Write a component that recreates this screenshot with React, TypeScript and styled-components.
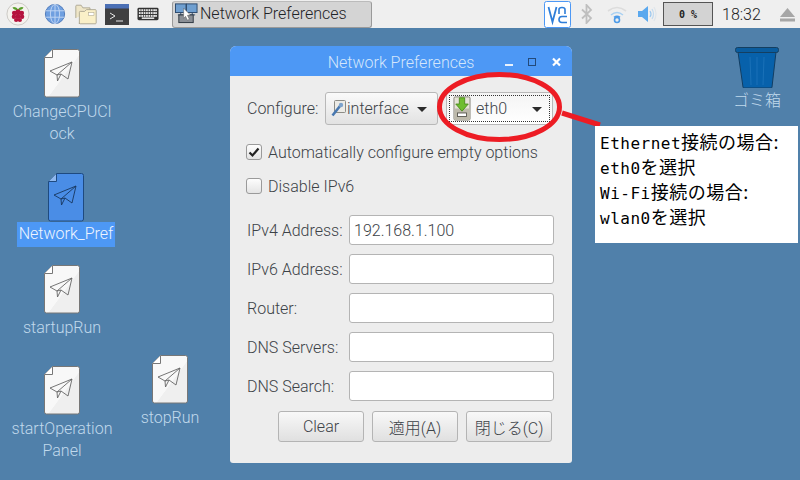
import React from 'react';
import styled, { createGlobalStyle } from 'styled-components';

const GlobalStyle = createGlobalStyle`
  html, body {
    margin: 0;
    padding: 0;
    width: 800px;
    height: 480px;
    overflow: hidden;
    background: #5080aa;
    font-family: Roboto, "Noto Sans CJK JP", sans-serif;
  }
  * { box-sizing: border-box; }
`;

const Raspberry = () => (
  <svg width="24" height="24" viewBox="0 0 26 26">
    <circle cx="13" cy="13" r="12" fill="#f4f2ee" stroke="#c9c7c2" />
    <path d="M13 8C11 5 8 5 7 6c1 2 3 3 6 3zM13 8c2-3 5-3 6-2-1 2-3 3-6 3z" fill="#5aa02c" />
    <g fill="#b5123e">
      <circle cx="13" cy="11" r="3" />
      <circle cx="9" cy="12" r="2.6" />
      <circle cx="17" cy="12" r="2.6" />
      <circle cx="8.6" cy="16" r="2.4" />
      <circle cx="17.4" cy="16" r="2.4" />
      <circle cx="13" cy="15.5" r="2.8" />
      <circle cx="11" cy="19.5" r="2.3" />
      <circle cx="15" cy="19.5" r="2.3" />
    </g>
  </svg>
);

const Globe = () => (
  <svg width="22" height="22" viewBox="0 0 24 24">
    <circle cx="12" cy="12" r="10.5" fill="#6f9fe0" stroke="#4a76b8" />
    <g fill="none" stroke="#c4d8f4" strokeWidth="1">
      <ellipse cx="12" cy="12" rx="5" ry="10.5" />
      <path d="M12 1.5v21M2 8.500h20M2 15.500h20" />
    </g>
  </svg>
);

const Folders = () => (
  <svg width="24" height="23" viewBox="0 0 26 26">
    <path d="M1.500 17V3.500q0-1 1-1h5l2 3h8v5" fill="#efe6c8" stroke="#a9a38f" />
    <path d="M5.500 23.500v-13q0-1 1-1h5l2-2h10q1 0 1 1v14q0 1-1 1h-17q-1 0-1-1z" fill="#faf0c8" stroke="#a9a38f" />
    <rect x="16" y="11" width="6" height="3" fill="#fff" stroke="#a9a38f" strokeWidth="0.6" />
  </svg>
);

const Terminal = () => (
  <svg width="24" height="21" viewBox="0 0 24 21">
    <rect width="24" height="21" fill="#3f3f40" />
    <rect width="24" height="4.500" fill="#4a6fb5" />
    <path d="M5 9l5 3-5 3" fill="none" stroke="#e8e8e8" />
    <path d="M11 17h7" stroke="#e8e8e8" />
  </svg>
);

const Keyboard = () => (
  <svg width="22" height="14" viewBox="0 0 23 14">
    <rect x="0.500" y="0.500" width="22" height="13" rx="1.500" fill="#333" />
    <g fill="#e6e6e6">
      {[2, 4.5, 7, 9.5, 12, 14.5, 17, 19].flatMap((x) =>
        [2, 5, 8].map((y) => <rect key={`${x}-${y}`} x={x} y={y} width="1.8" height="2" />)
      )}
      <rect x="5" y="10.6" width="13" height="1.6" />
    </g>
  </svg>
);

const NetworkGlyph = () => (
  <svg width="23" height="24" viewBox="0 0 24 24">
    <rect x="0.500" y="2.500" width="11" height="9" fill="#6f9fd0" stroke="#2d4a6e" />
    <rect x="12" y="2.500" width="11" height="9" fill="#6f9fd0" stroke="#2d4a6e" />
    <path d="M3 14h6M15 14h6M6 11.500V14M18 11.500V14" stroke="#2d4a6e" />
    <rect x="4" y="14" width="15" height="8" fill="#8a8f96" stroke="#2d3640" />
    <path d="M9 7l7 7-3 .5 2 4-2 1-2-4-2 2z" fill="#fff" stroke="#555" strokeWidth="0.5" />
  </svg>
);

const VncLogo = () => (
  <svg width="27" height="27" viewBox="0 0 27 27">
    <rect x="0.500" y="0.500" width="26" height="26" rx="2" fill="#fff" stroke="#4d98f5" />
    <path d="M4.500 6l4 15 4-15" fill="none" stroke="#2f7ed8" strokeWidth="1.8" />
    <path d="M15 13V8.500q0-2 3-2t3 2V13" fill="none" stroke="#2f7ed8" strokeWidth="1.6" />
    <path d="M23 15.500h-5q-3 0-3 3t3 3h5" fill="none" stroke="#2f7ed8" strokeWidth="1.6" />
  </svg>
);

const Bluetooth = () => (
  <svg width="12" height="20" viewBox="0 0 12 20">
    <path d="M1 5.500l9 8.500-4.500 5V1L10 6l-9 8.500" fill="none" stroke="#bfbfbf" strokeWidth="1.8" />
  </svg>
);

const Wifi = () => (
  <svg width="20" height="19" viewBox="0 0 20 19">
    <path d="M1 6q9-7 18 0" fill="none" stroke="#dcdcdc" strokeWidth="1.6" />
    <path d="M4 10q6-5 12 0" fill="none" stroke="#a8d0f2" strokeWidth="1.6" />
    <circle cx="10" cy="15" r="2.500" fill="none" stroke="#4d9be8" strokeWidth="1.6" />
    <path d="M7 12.300q3-2.200 6 0" fill="none" stroke="#4d9be8" strokeWidth="1.6" />
  </svg>
);

const Speaker = () => (
  <svg width="20" height="18" viewBox="0 0 20 18">
    <path d="M0 6h4l6-5v16l-6-5H0z" fill="#5aa8ee" />
    <path d="M12 6q2 3 0 6" fill="none" stroke="#9cc8ef" strokeWidth="1.2" />
    <path d="M14 4q3 5 0 10" fill="none" stroke="#c2daef" strokeWidth="1.2" />
    <path d="M16 2q4 7 0 14" fill="none" stroke="#dfe5ea" strokeWidth="1.2" />
  </svg>
);

const Eject = () => (
  <svg width="15" height="15" viewBox="0 0 15 15">
    <path d="M7.500 1L15 10H0z" fill="#a6a6a6" />
    <rect y="11.500" width="15" height="3" fill="#a6a6a6" />
  </svg>
);

const Plane = ({ stroke }: { stroke: string }) => (
  <g fill="none" stroke={stroke} strokeWidth="0.9" strokeLinejoin="round">
    <path d="M28 13L6 22l7 4 4-1 7 5z" />
    <path d="M28 13L13 26l.5 6 3.500-7" />
  </g>
);

const DocIcon = ({ selected }: { selected?: boolean }) => (
  <svg width="36" height="49" viewBox="0 0 36 49">
    <defs>
      <linearGradient id="pageFill" x1="0" y1="0" x2="1" y2="1">
        <stop offset="0.55" stopColor="#f8f8f8" />
        <stop offset="0.56" stopColor="#efefef" />
      </linearGradient>
    </defs>
    <path
      d="M8.500 .5H33.500q2 0 2 2V46q0 2-2 2H2.500q-2 0-2-2V8.500z"
      fill={selected ? '#4a8de6' : 'url(#pageFill)'}
      stroke={selected ? '#1e4a80' : '#777'}
    />
    <path d="M8.500 .5V8.500H.5" fill={selected ? '#8fb8ee' : '#fff'} stroke={selected ? '#1e4a80' : '#777'} />
    <Plane stroke={selected ? '#17375f' : '#666'} />
  </svg>
);

const TrashIcon = () => (
  <svg width="44" height="41" viewBox="0 0 44 41">
    <path d="M3 5h38l-4 35q0 1-1 1H9q-1 0-1-1z" fill="#0761ab" stroke="#123e63" />
    <path d="M15 10l1 28M22 10v28M29 10l-1 28" stroke="#1a71b8" />
    <rect x="0.500" y="0.500" width="43" height="5" rx="2" fill="#0a5c9e" stroke="#143f61" />
  </svg>
);

const DriveGlyph = () => (
  <svg width="20" height="25" viewBox="0 0 22 28">
    <rect x="2" y="1" width="18" height="26" rx="1.500" fill="#e6e3d8" stroke="#7d7a70" />
    <rect x="2.500" y="14" width="17" height="12.500" fill="#bdb9aa" />
    <rect x="6" y="19" width="10" height="4" fill="#fff" stroke="#55534a" />
    <path d="M8 2h6v7h4l-7 8-7-8h4z" fill="#6fbd2f" stroke="#4a8a1c" />
  </svg>
);

const WrenchGlyph = () => (
  <svg width="15" height="17" viewBox="0 0 15 17">
    <rect x="3.500" y="0.500" width="11" height="12" rx="1" fill="#ecebe6" stroke="#8c8c86" />
    <path d="M1.500 15.500L9 6" stroke="#4878b0" strokeWidth="2.600" />
    <circle cx="10" cy="5" r="2.200" fill="#7da3cc" />
  </svg>
);

const Desktop = styled.div`
  position: relative;
  width: 800px;
  height: 480px;
  background: #5080aa;
  overflow: hidden;
`;

const Panel = styled.header`
  display: flex;
  align-items: center;
  height: 28px;
  background: #efefef;
  color: #333;
`;

const Launchers = styled.div`
  display: flex;
  align-items: center;
  width: 172px;
  padding-left: 6px;
`;

const LauncherSlot = styled.span<{ $gap: number }>`
  display: flex;
  margin-left: ${(p) => p.$gap}px;
`;

const TaskButton = styled.div`
  display: flex;
  align-items: center;
  gap: 2px;
  width: 200px;
  height: 27px;
  padding: 0 0 2px 2px;
  background: #d4d4d4;
  border: 1px solid #9a9a9a;
  border-top-color: #bbb;
  border-radius: 3px;
  font-size: 16px;
  font-weight: 300;
  color: #1f2327;
`;

const Tray = styled.div`
  display: flex;
  align-items: center;
  margin-left: auto;
  height: 28px;
`;

const TraySlot = styled.span<{ $w: number }>`
  display: flex;
  justify-content: center;
  width: ${(p) => p.$w}px;
`;

const CpuBox = styled.div`
  display: flex;
  align-items: center;
  justify-content: center;
  width: 50px;
  height: 24px;
  background: #d3d3d3;
  border: 1px solid #555;
  font-family: "DejaVu Sans Mono", monospace;
  font-size: 10px;
  font-weight: 700;
  color: #222;
`;

const Clock = styled.div`
  width: 62px;
  padding-left: 9px;
  font-size: 16px;
  font-weight: 300;
  color: #222;
`;

const IconCell = styled.div<{ $x: number; $y: number; $w?: number }>`
  position: absolute;
  left: ${(p) => p.$x}px;
  top: ${(p) => p.$y}px;
  width: ${(p) => p.$w ?? 104}px;
  display: flex;
  flex-direction: column;
  align-items: center;
`;

const IconLabel = styled.div<{ $selected?: boolean; $gap?: number }>`
  margin-top: ${(p) => p.$gap ?? 3}px;
  padding: ${(p) => (p.$selected ? '1px 2px 2px' : '0')};
  background: ${(p) => (p.$selected ? '#4d98f5' : 'transparent')};
  color: ${(p) => (p.$selected ? '#eef5ff' : '#c0d9ec')};
  font-size: 16px;
  font-weight: 300;
  line-height: 22px;
  text-align: center;
  word-break: break-all;
`;

const Window = styled.section`
  position: absolute;
  left: 230px;
  top: 46px;
  width: 342px;
  height: 417px;
  display: flex;
  flex-direction: column;
  background: #ededed;
  border-radius: 6px 6px 3px 3px;
  overflow: hidden;
`;

const TitleBar = styled.div`
  position: relative;
  flex: 0 0 30px;
  display: flex;
  align-items: center;
  justify-content: center;
  padding-top: 2px;
  background: #4d98f5;
  color: #d4e6fb;
  font-size: 16px;
  font-weight: 300;
`;

const TitleControls = styled.div`
  position: absolute;
  right: 9px;
  top: 10px;
  display: flex;
  align-items: flex-start;
  gap: 13px;
`;

const WindowBody = styled.div`
  display: flex;
  flex-direction: column;
  padding: 16px 18px 0 16px;
  color: #3c4247;
  font-size: 16px;
  font-weight: 300;
`;

const ConfigRow = styled.div`
  display: flex;
  align-items: center;
  gap: 5px;
  height: 33px;
`;

const ConfigLabel = styled.span`
  width: 74px;
  padding-left: 1px;
`;

const Combo = styled.div<{ $w: number; $focus?: boolean }>`
  position: relative;
  display: flex;
  align-items: center;
  gap: ${(p) => (p.$focus ? 4 : 1)}px;
  width: ${(p) => p.$w}px;
  height: 33px;
  margin-left: ${(p) => (p.$focus ? 3 : 0)}px;
  padding: 0 5px;
  border: 1px solid #b8b8b8;
  border-radius: 3px;
  background: ${(p) => (p.$focus ? 'linear-gradient(#f4f4f4, #fff)' : 'linear-gradient(#fafafa, #e2e2e2)')};
  outline: ${(p) => (p.$focus ? '1px dotted #333' : 'none')};
  outline-offset: -4px;
`;

const Caret = styled.span`
  position: absolute;
  right: 10px;
  top: 14px;
  width: 0;
  height: 0;
  border-left: 5px solid transparent;
  border-right: 5px solid transparent;
  border-top: 5px solid #2b2b2b;
`;

const CheckRow = styled.label<{ $top: number }>`
  display: flex;
  align-items: center;
  gap: 6px;
  margin-top: ${(p) => p.$top}px;
  height: 20px;
`;

const CheckBox = styled.span`
  display: flex;
  align-items: center;
  justify-content: center;
  width: 16px;
  height: 16px;
  border: 1px solid #9a9a9a;
  border-radius: 3px;
  background: linear-gradient(#fdfdfd, #e4e4e4);
`;

const FieldGrid = styled.div`
  display: grid;
  grid-template-columns: 102px 205px;
  row-gap: 9px;
  margin-top: 19px;
  padding-left: 1px;
`;

const FieldLabel = styled.span`
  align-self: center;
`;

const Field = styled.div`
  height: 30px;
  padding: 0 4px;
  display: flex;
  align-items: center;
  border: 1px solid #b4b4b4;
  border-radius: 3px;
  background: #fff;
  color: #3c4247;
`;

const ButtonRow = styled.div`
  display: flex;
  justify-content: flex-end;
  gap: 8px;
  margin-top: 10px;
  padding-right: 2px;
`;

const ActionButton = styled.button`
  width: 86px;
  height: 31px;
  padding: 0;
  border: 1px solid #b4b4b4;
  border-radius: 3px;
  background: linear-gradient(#f8f8f8, #e0e0e0);
  color: #3c4247;
  font-family: inherit;
  font-size: 16px;
  font-weight: 300;
`;

const Overlay = styled.svg`
  position: absolute;
  left: 0;
  top: 0;
  pointer-events: none;
`;

const Callout = styled.div`
  position: absolute;
  left: 595px;
  top: 126px;
  width: 203px;
  height: 117px;
  padding: 3px 0 0 5px;
  background: #fff;
  color: #000;
  font-family: "Noto Sans CJK JP", sans-serif;
  font-size: 18px;
  font-weight: 400;
  line-height: 25px;
  letter-spacing: 0.5px;
  white-space: nowrap;
`;

const CalloutLine = styled.div`
  height: 25px;
`;

const Latin = styled.span`
  font-family: "DejaVu Sans Mono", monospace;
  font-size: 16px;
`;

const fields = [
  { label: 'IPv4 Address:', value: '192.168.1.100' },
  { label: 'IPv6 Address:', value: '' },
  { label: 'Router:', value: '' },
  { label: 'DNS Servers:', value: '' },
  { label: 'DNS Search:', value: '' },
];

export default function App() {
  return (
    <Desktop>
      <GlobalStyle />
      <Panel>
        <Launchers>
          <Raspberry />
          <LauncherSlot $gap={14}><Globe /></LauncherSlot>
          <LauncherSlot $gap={8}><Folders /></LauncherSlot>
          <LauncherSlot $gap={7}><Terminal /></LauncherSlot>
          <LauncherSlot $gap={8}><Keyboard /></LauncherSlot>
        </Launchers>
        <TaskButton>
          <NetworkGlyph />
          Network Preferences
        </TaskButton>
        <Tray>
          <TraySlot $w={30}><VncLogo /></TraySlot>
          <TraySlot $w={30}><Bluetooth /></TraySlot>
          <TraySlot $w={30}><Wifi /></TraySlot>
          <TraySlot $w={31}><Speaker /></TraySlot>
          <CpuBox>0 %</CpuBox>
          <Clock>18:32</Clock>
          <TraySlot $w={25}><Eject /></TraySlot>
        </Tray>
      </Panel>

      <IconCell $x={10} $y={49}>
        <DocIcon />
        <IconLabel $gap={3}>ChangeCPUCl<br />ock</IconLabel>
      </IconCell>
      <IconCell $x={14} $y={173}>
        <DocIcon selected />
        <IconLabel $selected $gap={0}>Network_Pref</IconLabel>
      </IconCell>
      <IconCell $x={10} $y={265}>
        <DocIcon />
        <IconLabel $gap={3}>startupRun</IconLabel>
      </IconCell>
      <IconCell $x={10} $y={366}>
        <DocIcon />
        <IconLabel $gap={3}>startOperation<br />Panel</IconLabel>
      </IconCell>
      <IconCell $x={118} $y={355}>
        <DocIcon />
        <IconLabel $gap={3}>stopRun</IconLabel>
      </IconCell>
      <IconCell $x={708} $y={47} $w={98}>
        <TrashIcon />
        <IconLabel $gap={2}>ゴミ箱</IconLabel>
      </IconCell>

      <Window>
        <TitleBar>
          Network Preferences
          <TitleControls>
            <svg width="10" height="14" viewBox="0 0 10 14"><rect y="8" width="8" height="2" fill="#e8f1fc" /></svg>
            <svg width="10" height="14" viewBox="0 0 10 14"><rect x="0.500" y="2.500" width="7" height="7" fill="none" stroke="#234a7a" /></svg>
            <svg width="12" height="14" viewBox="0 0 12 14"><path d="M2 2.500l7 7M9 2.500l-7 7" stroke="#fff" strokeWidth="2.200" /></svg>
          </TitleControls>
        </TitleBar>
        <WindowBody>
          <ConfigRow>
            <ConfigLabel>Configure:</ConfigLabel>
            <Combo $w={113}>
              <WrenchGlyph />
              interface
              <Caret />
            </Combo>
            <Combo $w={107} $focus>
              <DriveGlyph />
              eth0
              <Caret />
            </Combo>
          </ConfigRow>
          <CheckRow $top={17}>
            <CheckBox>
              <svg width="12" height="12" viewBox="0 0 12 12">
                <path d="M1.500 6.500l3 3 6-7" fill="none" stroke="#222" strokeWidth="2.200" />
              </svg>
            </CheckBox>
            Automatically configure empty options
          </CheckRow>
          <CheckRow $top={14}>
            <CheckBox />
            Disable IPv6
          </CheckRow>
          <FieldGrid>
            {fields.map((f) => (
              <React.Fragment key={f.label}>
                <FieldLabel>{f.label}</FieldLabel>
                <Field>{f.value}</Field>
              </React.Fragment>
            ))}
          </FieldGrid>
          <ButtonRow>
            <ActionButton>Clear</ActionButton>
            <ActionButton>適用(A)</ActionButton>
            <ActionButton>閉じる(C)</ActionButton>
          </ButtonRow>
        </WindowBody>
      </Window>

      <Overlay width="800" height="480" viewBox="0 0 800 480">
        <ellipse cx="499.500" cy="107" rx="60" ry="32.500" fill="none" stroke="#ed1c24" strokeWidth="5" />
        <path d="M562 113L600 125" stroke="#ed1c24" strokeWidth="5" />
      </Overlay>

      <Callout>
        <CalloutLine><Latin>Ethernet</Latin>接続の場合:</CalloutLine>
        <CalloutLine><Latin>eth0</Latin>を選択</CalloutLine>
        <CalloutLine><Latin>Wi-Fi</Latin>接続の場合:</CalloutLine>
        <CalloutLine><Latin>wlan0</Latin>を選択</CalloutLine>
      </Callout>
    </Desktop>
  );
}
